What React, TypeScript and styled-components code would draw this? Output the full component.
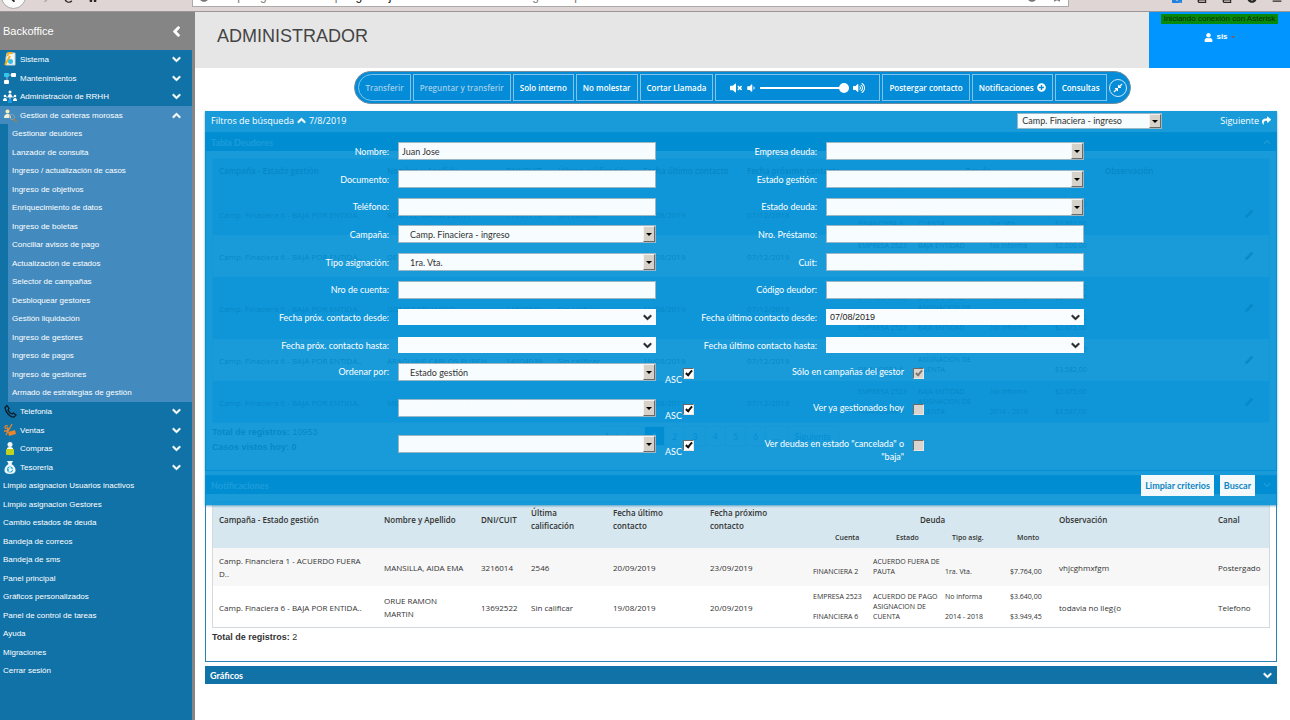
import React from "react";
import styled, { createGlobalStyle, css } from "styled-components";
import {
  FaArrowLeft,
  FaArrowRight,
  FaBars,
  FaBook,
  FaChevronDown,
  FaChevronLeft,
  FaChevronUp,
  FaCompressAlt,
  FaDownload,
  FaHome,
  FaInfoCircle,
  FaPencilAlt,
  FaPlusCircle,
  FaRedo,
  FaRegStar,
  FaShare,
  FaUser,
  FaVolumeDown,
  FaVolumeMute,
  FaVolumeUp,
} from "react-icons/fa";

const sans = `Lato, "Open Sans", sans-serif`;
const openSans = `"Open Sans", "Noto Sans", sans-serif`;
const arial = `"Liberation Sans", Arial, sans-serif`;

const GlobalStyle = createGlobalStyle`
  *, *::before, *::after { box-sizing: border-box; }
  body { margin: 0; background: #fff; font-family: ${sans}; font-size: 9px; color: #333; overflow: hidden; }
  button, input, select { font: inherit; color: inherit; margin: 0; }
  ul { list-style: none; margin: 0; padding: 0; }
  a { color: inherit; text-decoration: none; }
  svg { display: block; flex: none; }
`;

/* heavy chevrons used by menus, panels and date boxes */
const heavy = { stroke: "currentColor", strokeWidth: 50 };

/* ---------- browser strip ---------- */

const BrowserStrip = styled.div`
  height: 12px;
  display: grid;
  grid-template-columns: 192px 878fr 221fr;
  align-content: end;
  align-items: end;
  overflow: hidden;
  background: #dfd5d5;
  border-bottom: 1px solid #9b9696;
`;

const NavIcons = styled.div`
  display: flex;
  align-items: end;
  gap: 14px;
  padding: 0 0 8px 1px;
  color: #2a2626;
`;

const BackButton = styled.button`
  width: 25px;
  height: 25px;
  margin-bottom: -6px;
  padding: 0;
  border: 1px solid #aaa;
  border-radius: 50%;
  background: #fbfbfb;
  display: flex;
  align-items: center;
  justify-content: center;
`;

const AddressBar = styled.div`
  height: 24px;
  margin-bottom: 4px;
  padding: 0 6px 2px;
  display: flex;
  align-items: end;
  gap: 15px;
  background: #fff;
  border: 1px solid #aaa;
  color: #777;
  font: 12px/16px ${arial};
  b { font-weight: 400; color: #111; }
  span { flex: 1; }
  svg { margin-bottom: 2px; }
`;

const ToolIcons = styled.div`
  display: flex;
  align-items: end;
  justify-content: end;
  gap: 15px;
  padding: 0 8px 8px 0;
  color: #2a2626;
`;

/* ---------- shell ---------- */

const Shell = styled.div`
  display: flex;
  min-height: calc(100vh - 12px);
`;

const Sidebar = styled.nav`
  flex: none;
  width: 195px;
  background: #1172a7;
  border-right: 3px solid #858585;
  color: #fff;
  font-family: ${arial};
  font-size: 8px;
`;

const SideHead = styled.div`
  height: 38px;
  padding: 0 10px 0 3px;
  display: flex;
  align-items: center;
  justify-content: space-between;
  background: #858585;
  font-size: 11px;
`;

const rowHeights = css`
  > li > a { height: 19px; }
  > li:nth-child(even) > a { height: 18px; }
`;

const Menu = styled.ul`
  ${rowHeights}
`;

const SubMenu = styled.ul`
  margin-left: 8px;
  background: #438bbe;
  ${rowHeights}
`;

const MenuLink = styled.a<{ $open?: boolean; $sub?: boolean }>`
  display: flex;
  align-items: center;
  gap: 3px;
  padding: 0 11px 0 ${(p) => (p.$sub ? 4 : 3)}px;
  white-space: nowrap;
  ${(p) => p.$open && "background: #438bbe;"}
  > span { flex: 1; }
`;

const Main = styled.main`
  flex: 1;
  min-width: 0;
`;

const TopBar = styled.header`
  display: flex;
  height: 56px;
  background: #e6e6e6;
`;

const Title = styled.h1`
  flex: 1;
  margin: 0;
  padding: 13px 22px;
  font: 400 18px/22px ${arial};
  color: #444;
`;

const UserBox = styled.div`
  width: 141px;
  padding-top: 2px;
  background: #0095ff;
  display: flex;
  flex-direction: column;
  align-items: center;
  gap: 8px;
  font: 8px/10px ${arial};
`;

const Status = styled.span`
  padding: 0 3px;
  background: #078a0c;
  color: #052a08;
  white-space: nowrap;
`;

const UserButton = styled.button`
  display: flex;
  align-items: center;
  gap: 3px;
  padding: 0;
  border: 0;
  background: none;
  color: #fff;
  font-weight: 700;
  i { border: 2px solid transparent; border-top-color: #8a5a4a; border-bottom: 0; }
`;

/* ---------- phone toolbar ---------- */

const CallBar = styled.div`
  width: max-content;
  margin: 3px auto 7px;
  height: 33px;
  padding: 0 3px;
  display: flex;
  align-items: center;
  gap: 2px;
  border: 1px solid #6f8b9c;
  border-radius: 17px;
  background: #048cd8;
`;

const CallButton = styled.button<{ $first?: boolean }>`
  height: 27px;
  padding: 0 6px;
  display: flex;
  align-items: center;
  gap: 3px;
  border: 1px solid #83c3ea;
  border-radius: ${(p) => (p.$first ? "14px 0 0 14px" : "0")};
  background: none;
  color: #fff;
  font: 600 8px ${openSans};
  white-space: nowrap;
  &:disabled { color: #9fcdea; }
`;

const Volume = styled.div`
  height: 27px;
  width: 165px;
  padding: 0 14px;
  display: flex;
  align-items: center;
  gap: 4px;
  border: 1px solid #83c3ea;
  color: #fff;
`;

const Slider = styled.input`
  flex: 1;
  min-width: 0;
  height: 10px;
  appearance: none;
  background: linear-gradient(#fff, #fff) center / 100% 2px no-repeat;
  &::-webkit-slider-thumb {
    appearance: none;
    width: 10px;
    height: 10px;
    border-radius: 50%;
    background: #fff;
  }
`;

const RoundButton = styled.button`
  width: 18px;
  height: 18px;
  padding: 0;
  display: flex;
  align-items: center;
  justify-content: center;
  border: 1px solid #cfe8f7;
  border-radius: 50%;
  background: none;
  color: #fff;
`;

/* ---------- panels ---------- */

const Workspace = styled.div`
  position: relative;
  margin: 0 13px 0 10px;
  padding-top: 21px;
  display: flex;
  flex-direction: column;
  gap: 4px;
`;

const Panel = styled.section`
  border: 1px solid #2a83b3;
  background: #fff;
`;

const PanelHead = styled.h2`
  margin: 0;
  height: 18px;
  padding: 0 5px;
  display: flex;
  align-items: center;
  justify-content: space-between;
  background: #1172a7;
  color: #fff;
  font-size: 9px;
  font-weight: 700;
`;

const PanelBody = styled.div<{ $tall: number }>`
  min-height: ${(p) => p.$tall}px;
  padding: 7px 6px 0;
`;

const DataTable = styled.table<{ $tint: string; $stripe: string; $nowrap: boolean }>`
  width: 100%;
  table-layout: fixed;
  border-collapse: collapse;
  outline: 1px solid #d3d9dc;
  outline-offset: -1px;
  font-family: ${openSans};
  font-size: 8px;
  line-height: 13px;
  white-space: ${(p) => (p.$nowrap ? "nowrap" : "pre-line")};
  th { padding: 5px 0 4px 7px; vertical-align: top; text-align: left; font-weight: 600; }
  td { padding: 6px 0 6px 7px; }
  thead { background: ${(p) => p.$tint}; }
  tbody tr:nth-child(odd) { background: ${(p) => p.$stripe}; }
`;

const HeadLabel = styled.div<{ $two?: boolean; $mid?: boolean }>`
  height: ${(p) => (p.$two ? 26 : 14)}px;
  display: flex;
  align-items: center;
  justify-content: ${(p) => (p.$mid ? "center" : "start")};
`;

const DebtGrid = styled.div<{ $head?: boolean }>`
  display: grid;
  grid-template-columns: ${(p) => (p.$head ? "61px 56px 65px" : "60px 72px 65px")} 1fr;
  align-items: end;
  padding-left: ${(p) => (p.$head ? 22 : 0)}px;
  font-size: 7px;
  line-height: ${(p) => (p.$head ? 12 : 10)}px;
  white-space: normal;
`;

const Totals = styled.div`
  padding-top: 2px;
  line-height: 15px;
  font-family: ${arial};
`;

const TableFoot = styled.div`
  display: grid;
  grid-template-columns: 385fr 673fr;
  align-items: start;
`;

const Pager = styled.div`
  margin-top: 3px;
  display: flex;
  button {
    height: 20px;
    min-width: 20px;
    padding: 0 7px;
    border: 1px solid #ccdde6;
    border-left-width: 0;
    background: none;
    color: #1172a7;
  }
  button[aria-current] { background: #1172a7; color: #fff; }
`;

/* ---------- filter sheet ---------- */

const FilterSheet = styled.form`
  position: absolute;
  inset: 0 0 auto 0;
  min-height: 394px;
  display: flex;
  flex-direction: column;
  background: rgba(0, 144, 214, 0.9);
  color: #fff;
  box-shadow: 0 1px 2px rgba(0, 110, 170, 0.6);
`;

const FilterHead = styled.div`
  height: 19px;
  padding: 0 6px;
  display: flex;
  align-items: center;
  justify-content: space-between;
`;

const Caption = styled.button`
  padding: 0;
  border: 0;
  background: none;
  display: flex;
  align-items: center;
  gap: 3px;
  font-family: ${openSans};
`;

const HeadTools = styled.div`
  display: flex;
  align-items: center;
  gap: 58px;
`;

const Rows = styled.div`
  padding-top: 7px;
  flex: 1;
`;

const Row = styled.div`
  display: grid;
  grid-template-columns: 184fr 258fr 152fr 258fr 184fr;
  column-gap: 9px;
  align-items: center;
  height: 28px;
  &:nth-child(3n) { height: 27px; }
`;

const SortRow = styled.div`
  display: grid;
  grid-template-columns: 184fr 258fr 30fr 200fr 364fr;
  column-gap: 9px;
  align-items: start;
  padding-top: 4px;
  height: 36px;
`;

const Label = styled.label<{ $sort?: boolean }>`
  text-align: right;
  line-height: 13px;
  ${(p) => p.$sort && "padding: 2px 0 0 50px;"}
`;

const TextBox = styled.input`
  width: 100%;
  height: 18px;
  padding: 0 3px;
  border: 1px solid #9bb6c4;
  border-radius: 0;
  background: rgba(255, 255, 255, 0.97);
  color: #333;
`;

const SelectWrap = styled.div<{ $small?: boolean }>`
  position: relative;
  width: ${(p) => (p.$small ? "145px" : "100%")};
  height: ${(p) => (p.$small ? 16 : 18)}px;
  select {
    width: 100%;
    height: 100%;
    padding: 0 14px 0 ${(p) => (p.$small ? 4 : 11)}px;
    appearance: none;
    border: 1px solid #9bb6c4;
    border-radius: 0;
    background: rgba(255, 255, 255, 0.97);
    color: #333;
  }
  &::before {
    content: "";
    position: absolute;
    inset: 1px 1px 1px auto;
    width: 12px;
    background: #d6d2ca;
    border: 1px solid;
    border-color: #f4f2ee #6d6a66 #6d6a66 #f4f2ee;
    pointer-events: none;
  }
  &::after {
    content: "";
    position: absolute;
    right: 4px;
    top: calc(50% - 1px);
    border: 3px solid transparent;
    border-top-color: #000;
    border-bottom: 0;
    pointer-events: none;
  }
`;

const DateBox = styled.div`
  height: 16px;
  display: flex;
  align-items: center;
  padding-right: 4px;
  background: rgba(255, 255, 255, 0.98);
  color: #222;
  font-family: ${arial};
  input { flex: 1; min-width: 0; height: 16px; padding: 0 4px; border: 0; background: none; outline: 0; }
  button { padding: 0; border: 0; background: none; }
`;

const Asc = styled.label`
  display: flex;
  align-items: start;
  gap: 1px;
  padding-top: 5px;
  span { padding-top: 6px; line-height: 12px; }
`;

const Tick = styled.input`
  appearance: none;
  flex: none;
  width: 11px;
  height: 11px;
  border: 1px solid;
  border-color: #6d6a66 #e8e6e2 #e8e6e2 #6d6a66;
  background: #fff;
  display: grid;
  place-items: center;
  &:checked::after {
    content: "";
    width: 4px;
    height: 7px;
    border: solid #111;
    border-width: 0 2px 2px 0;
    rotate: 40deg;
    translate: 0 -1px;
  }
  &:disabled { background: #d9d5ce; }
  &:disabled::after { border-color: #7d7a76; }
`;

const TickCell = styled.div`
  padding-top: 5px;
`;

const Actions = styled.div`
  display: flex;
  justify-content: end;
  gap: 6px;
  padding: 0 22px 9px;
  button {
    height: 21px;
    padding: 0 4px;
    border: 0;
    background: #f3f8fa;
    color: #0b86c4;
    font-weight: 700;
  }
`;

/* ---------- sidebar drawings ---------- */

const Ico = ({ name }: { name: string }) => (
  <svg width="14" height="15" viewBox="0 0 14 15" fill="none">
    {name === "sistema" && (
      <>
        <path d="M4 1h8v12H3V6z" fill="#f4f7f8" stroke="#c9d3d8" />
        <path d="M2 13L7 4M5 4a2 2 0 0 1 4-2" stroke="#f2b01e" strokeWidth="2" />
        <circle cx="7.500" cy="9.500" r="2.500" fill="#35bde6" />
      </>
    )}
    {name === "mant" && (
      <>
        <path d="M4 4h7M4 4v8" stroke="#9fb6c2" />
        <rect x="1" y="2" width="5" height="4" rx="1" fill="#35c6f0" />
        <rect x="8" y="2" width="5" height="4" rx="1" fill="#fff" />
        <rect x="1" y="9" width="5" height="4" rx="1" fill="#fff" />
      </>
    )}
    {name === "rrhh" && (
      <>
        <path d="M3 8h8M7 6v5" stroke="#cfe0ea" />
        <circle cx="7" cy="3" r="1.500" fill="#fff" />
        <path d="M5 8q0-3 2-3t2 3z" fill="#fff" />
        <circle cx="2" cy="7" r="1.300" fill="#fff" />
        <path d="M0 12q0-3 2-3t2 3zM10 12q0-3 2-3t2 3z" fill="#fff" />
        <circle cx="12" cy="7" r="1.300" fill="#fff" />
        <path d="M5 14q0-4 2-4t2 4z" fill="#1b9be8" />
      </>
    )}
    {name === "gestion" && (
      <>
        <circle cx="4.500" cy="3.500" r="2" fill="#f7efb4" />
        <path d="M1 10q0-4 3.500-4T8 10z" fill="#f3f0d8" />
        <circle cx="9" cy="9" r="2.500" stroke="#8e9ba6" />
        <path d="M11 11l3 3" stroke="#a2803c" strokeWidth="1.500" />
      </>
    )}
    {name === "tel" && (
      <path
        d="M2 3.500l2-2 2 3-1 1.500q1 3 4 4l1.500-1 2.500 2-2 2q-3 .5-6-3T2 3.500z"
        stroke="#0b1c28"
        strokeWidth="1.300"
      />
    )}
    {name === "ventas" && (
      <>
        <path d="M9 1L3 12M5 3q-3-1-3 1t2 1 0 3H1" stroke="#e8862c" strokeWidth="1.300" />
        <path d="M5 9l7-2 1 4-7 2z" fill="#e8862c" />
      </>
    )}
    {name === "compras" && (
      <>
        <circle cx="7" cy="3.500" r="2.500" fill="#f1f5f6" />
        <path d="M4 7q3-2 6 0v3H4z" fill="#fff" />
        <rect x="3" y="8" width="8" height="6" rx="1" fill="#c2d11c" />
      </>
    )}
    {name === "tesoreria" && (
      <>
        <path d="M4 1h6L8.500 4Q13 7 12.500 11q-.5 3-5.500 3T1.500 11Q1 7 5.500 4z" fill="#eef5f7" />
        <circle cx="7" cy="9.500" r="3" fill="#22a9d8" />
        <path d="M8.500 8.300q-3-1-3 .3t3 1-3 1.600M7 7v5" stroke="#fff" />
      </>
    )}
  </svg>
);

const subItems = [
  "Gestionar deudores",
  "Lanzador de consulta",
  "Ingreso / actualización de casos",
  "Ingreso de objetivos",
  "Enriquecimiento de datos",
  "Ingreso de boletas",
  "Conciliar avisos de pago",
  "Actualización de estados",
  "Selector de campañas",
  "Desbloquear gestores",
  "Gestión liquidación",
  "Ingreso de gestores",
  "Ingreso de pagos",
  "Ingreso de gestiones",
  "Armado de estrategias de gestión",
];

type Item = { text: string; icon?: string; open?: boolean };

const menu: Item[] = [
  { text: "Sistema", icon: "sistema" },
  { text: "Mantenimientos", icon: "mant" },
  { text: "Administración de RRHH", icon: "rrhh" },
  { text: "Gestion de carteras morosas", icon: "gestion", open: true },
  { text: "Telefonia", icon: "tel" },
  { text: "Ventas", icon: "ventas" },
  { text: "Compras", icon: "compras" },
  { text: "Tesoreria", icon: "tesoreria" },
  { text: "Limpio asignacion Usuarios inactivos" },
  { text: "Limpio asignacion Gestores" },
  { text: "Cambio estados de deuda" },
  { text: "Bandeja de correos" },
  { text: "Bandeja de sms" },
  { text: "Panel principal" },
  { text: "Gráficos personalizados" },
  { text: "Panel de control de tareas" },
  { text: "Ayuda" },
  { text: "Migraciones" },
  { text: "Cerrar sesión" },
];

/* ---------- table data ---------- */

type Debt = [string, string, string, string];
type Case = { cells: string[]; debts: Debt[]; note?: string; channel?: string };

const debtors: Case[] = [
  {
    cells: ["Camp. Finaciera 6 - BAJA POR ENTIDA..", "BENITEZ MARIA EDITH", "31631776", "Sin calificar", "19/08/2019", "07/12/2018"],
    debts: [
      ["EMPRESA 2523", "BAJA ENTIDAD", "No informa", "$3.115,00"],
      ["FINANCIERA 6", "ASIGNACION DE CUENTA", "1ra. Vta.", "$3.862,00"],
    ],
  },
  {
    cells: ["Camp. Finaciera 6 - BAJA POR ENTIDA..", "DEL VALLE ANA MARIA", "24255001", "Sin calificar", "19/08/2019", "07/12/2018"],
    debts: [
      ["EMPRESA 2523", "BAJA ENTIDAD", "No informa", "$2.000,00"],
      ["FINANCIERA 6", "PREPAGO", "1ra. Vta.", "$204,00"],
      ["FINANCIERA 6", "VENDIDA", "1ra. Vta.", "$300,00"],
    ],
  },
  {
    cells: ["Camp. Finaciera 6 - BAJA POR ENTIDA..", "GOMEZ EDUARDO", "14630669", "Sin calificar", "19/08/2019", "07/12/2018"],
    debts: [
      ["EMPRESA 2523", "BAJA ENTIDAD", "No informa", "$3.117,70"],
      ["EMPRESA 2523", "BAJA ENTIDAD", "No informa", "$3.117,70"],
      ["FINANCIERA 6", "ASIGNACION DE CUENTA", "No informa", "$3.355,00"],
      ["EMPRESA 2523", "BAJA ENTIDAD", "No informa", "$2.475,00"],
    ],
  },
  {
    cells: ["Camp. Finaciera 6 - BAJA POR ENTIDA..", "ARAGUINE CARLOS RUBEN", "14804039", "Sin calificar", "19/08/2019", "07/12/2018"],
    debts: [
      ["EMPRESA 2523", "BAJA ENTIDAD", "No informa", "$2.775,00"],
      ["FINANCIERA 6", "ASIGNACION DE CUENTA", "", "$3.582,00"],
    ],
  },
  {
    cells: ["Camp. Finaciera 6 - BAJA POR ENTIDA..", "MENDEZ JORGE DANIEL", "14855003", "Sin calificar", "19/08/2019", "07/12/2018"],
    debts: [
      ["EMPRESA 2523", "BAJA ENTIDAD", "No informa", "$2.475,00"],
      ["FINANCIERA 6", "ASIGNACION DE CUENTA", "2014 - 2018", "$3.587,00"],
    ],
  },
];

const results: Case[] = [
  {
    cells: ["Camp. Financiera 1 - ACUERDO FUERA\nD..", "MANSILLA, AIDA EMA", "3216014", "2546", "20/09/2019", "23/09/2019"],
    debts: [["FINANCIERA 2", "ACUERDO FUERA DE PAUTA", "1ra. Vta.", "$7.764,00"]],
    note: "vhjcghmxfgm",
    channel: "Postergado",
  },
  {
    cells: ["Camp. Finaciera 6 - BAJA POR ENTIDA..", "ORUE RAMON\nMARTIN", "13692522", "Sin calificar", "19/08/2019", "20/09/2019"],
    debts: [
      ["EMPRESA 2523", "ACUERDO DE PAGO", "No informa", "$3.640,00"],
      ["FINANCIERA 6", "ASIGNACION DE CUENTA", "2014 - 2018", "$3.949,45"],
    ],
    note: "todavia no lleg{o",
    channel: "Telefono",
  },
];

const heads = [
  "Campaña - Estado gestión",
  "Nombre y Apellido",
  "DNI/CUIT",
  "Última\ncalificación",
  "Fecha último\ncontacto",
  "Fecha próximo\ncontacto",
];

const debtorCols = [168, 119, 52, 85, 104, 111, 247, 0, 32];
const resultCols = [165, 97, 50, 82, 97, 103, 246, 0, 59];

function CaseTable({ rows, cols, wide = false }: { rows: Case[]; cols: number[]; wide?: boolean }) {
  return (
    <DataTable $tint={wide ? "#d6e7ef" : "#9ccbe8"} $stripe={wide ? "#f7f7f7" : "#9ccbe8"} $nowrap={!wide}>
      <colgroup>
        {cols.map((w, i) => (
          <col key={i} width={w || undefined} />
        ))}
      </colgroup>
      <thead>
        <tr>
          {heads.map((h) => (
            <th key={h}>
              <HeadLabel $two={wide}>{h}</HeadLabel>
            </th>
          ))}
          <th>
            <HeadLabel $two={wide} $mid>Deuda</HeadLabel>
            <DebtGrid $head>
              <span>Cuenta</span>
              <span>Estado</span>
              <span>Tipo asig.</span>
              <span>Monto</span>
            </DebtGrid>
          </th>
          <th>
            <HeadLabel $two={wide}>Observación</HeadLabel>
          </th>
          <th>
            <HeadLabel $two={wide}>{wide ? "Canal" : ""}</HeadLabel>
          </th>
        </tr>
      </thead>
      <tbody>
        {rows.map((r, i) => (
          <tr key={i}>
            {r.cells.map((c, j) => (
              <td key={j}>{c}</td>
            ))}
            <td>
              {r.debts.map((d, j) => (
                <DebtGrid key={j}>
                  {d.map((v, k) => (
                    <span key={k}>{v}</span>
                  ))}
                </DebtGrid>
              ))}
            </td>
            <td>{r.note}</td>
            <td>{wide ? r.channel : <FaPencilAlt size={8} />}</td>
          </tr>
        ))}
      </tbody>
    </DataTable>
  );
}

/* ---------- form pieces ---------- */

type FieldDef = { label: string; kind: "text" | "select" | "date"; value?: string };

const left: FieldDef[] = [
  { label: "Nombre:", kind: "text", value: "Juan Jose" },
  { label: "Documento:", kind: "text" },
  { label: "Teléfono:", kind: "text" },
  { label: "Campaña:", kind: "select", value: "Camp. Finaciera - ingreso" },
  { label: "Tipo asignación:", kind: "select", value: "1ra. Vta." },
  { label: "Nro de cuenta:", kind: "text" },
  { label: "Fecha próx. contacto desde:", kind: "date" },
  { label: "Fecha próx. contacto hasta:", kind: "date" },
];

const right: FieldDef[] = [
  { label: "Empresa deuda:", kind: "select" },
  { label: "Estado gestión:", kind: "select" },
  { label: "Estado deuda:", kind: "select" },
  { label: "Nro. Préstamo:", kind: "text" },
  { label: "Cuit:", kind: "text" },
  { label: "Código deudor:", kind: "text" },
  { label: "Fecha último contacto desde:", kind: "date", value: "07/08/2019" },
  { label: "Fecha último contacto hasta:", kind: "date" },
];

const sorts = [
  { label: "Ordenar por:", value: "Estado gestión", check: "Sólo en campañas del gestor", on: true },
  { label: "", value: "", check: "Ver ya gestionados hoy", on: false },
  { label: "", value: "", check: 'Ver deudas en estado "cancelada" o "baja"', on: false },
];

function Select({ id, value, small, name }: { id: string; value?: string; small?: boolean; name?: string }) {
  return (
    <SelectWrap $small={small}>
      <select id={id} aria-label={name}>
        <option>{value}</option>
      </select>
    </SelectWrap>
  );
}

function Field({ def, id }: { def: FieldDef; id: string }) {
  return (
    <>
      <Label htmlFor={id}>{def.label}</Label>
      {def.kind === "text" && <TextBox id={id} defaultValue={def.value} />}
      {def.kind === "select" && <Select id={id} value={def.value} />}
      {def.kind === "date" && (
        <DateBox>
          <input id={id} defaultValue={def.value} />
          <button type="button" aria-label="Abrir calendario">
            <FaChevronDown size={9} {...heavy} />
          </button>
        </DateBox>
      )}
    </>
  );
}

export default function App() {
  return (
    <>
      <GlobalStyle />
      <BrowserStrip>
        <NavIcons>
          <BackButton aria-label="Atrás">
            <FaArrowLeft size={12} />
          </BackButton>
          <FaArrowRight size={10} color="#aaa" />
          <FaRedo size={10} />
          <FaHome size={10} />
        </NavIcons>
        <AddressBar>
          <FaInfoCircle size={10} />
          <span>
            https://gestion.adminpro.<b>gestorjuridico.com</b>/administrador/gestion/panel
          </span>
          <FaInfoCircle size={10} />
          <FaRegStar size={10} />
        </AddressBar>
        <ToolIcons>
          <FaDownload size={10} color="#1a7fe0" />
          <FaBook size={10} />
          <FaBook size={10} />
          <FaInfoCircle size={10} />
          <FaBars size={10} />
        </ToolIcons>
      </BrowserStrip>
      <Shell>
        <Sidebar>
          <SideHead>
            Backoffice
            <FaChevronLeft size={11} {...heavy} />
          </SideHead>
          <Menu>
            {menu.map((m) => (
              <li key={m.text}>
                <MenuLink href="#" $open={m.open}>
                  {m.icon && <Ico name={m.icon} />}
                  <span>{m.text}</span>
                  {m.icon && (m.open ? <FaChevronUp size={9} {...heavy} /> : <FaChevronDown size={9} {...heavy} />)}
                </MenuLink>
                {m.open && (
                  <SubMenu>
                    {subItems.map((s) => (
                      <li key={s}>
                        <MenuLink href="#" $sub>
                          {s}
                        </MenuLink>
                      </li>
                    ))}
                  </SubMenu>
                )}
              </li>
            ))}
          </Menu>
        </Sidebar>
        <Main>
          <TopBar>
            <Title>ADMINISTRADOR</Title>
            <UserBox>
              <Status>Iniciando conexión con Asterisk</Status>
              <UserButton>
                <FaUser size={9} />
                sis
                <i />
              </UserButton>
            </UserBox>
          </TopBar>
          <CallBar>
            <CallButton $first disabled>Transferir</CallButton>
            <CallButton disabled>Preguntar y transferir</CallButton>
            <CallButton>Solo interno</CallButton>
            <CallButton>No molestar</CallButton>
            <CallButton>Cortar Llamada</CallButton>
            <Volume>
              <FaVolumeMute size={12} />
              <FaVolumeDown size={10} />
              <Slider type="range" defaultValue={100} aria-label="Volumen" />
              <FaVolumeUp size={12} />
            </Volume>
            <CallButton>Postergar contacto</CallButton>
            <CallButton>
              Notificaciones
              <FaPlusCircle size={9} />
            </CallButton>
            <CallButton>Consultas</CallButton>
            <RoundButton aria-label="Contraer">
              <FaCompressAlt size={10} />
            </RoundButton>
          </CallBar>
          <Workspace>
            <Panel>
              <PanelHead>
                Tabla Deudores
                <FaChevronUp size={8} />
              </PanelHead>
              <PanelBody $tall={319}>
                <CaseTable rows={debtors} cols={debtorCols} />
                <TableFoot>
                  <Totals>
                    <b>Total de registros:</b> 10953
                    <br />
                    <b>Casos vistos hoy: 0</b>
                  </Totals>
                  <Pager>
                    <button>Anterior</button>
                    <button aria-current="page">1</button>
                    <button>2</button>
                    <button>3</button>
                    <button>4</button>
                    <button>5</button>
                    <button>6</button>
                    <button>...</button>
                    <button>Siguiente</button>
                  </Pager>
                </TableFoot>
              </PanelBody>
            </Panel>
            <Panel>
              <PanelHead>
                Notificaciones
                <FaChevronDown size={8} />
              </PanelHead>
              <PanelBody $tall={167}>
                <CaseTable rows={results} cols={resultCols} wide />
                <Totals>
                  <b>Total de registros:</b> 2
                </Totals>
              </PanelBody>
            </Panel>
            <PanelHead>
              Gráficos
              <FaChevronDown size={9} {...heavy} />
            </PanelHead>
            <FilterSheet onSubmit={(e) => e.preventDefault()}>
              <FilterHead>
                <Caption type="button">
                  Filtros de búsqueda <FaChevronUp size={9} {...heavy} /> 7/8/2019
                </Caption>
                <HeadTools>
                  <Select id="campaign" name="Campaña activa" value="Camp. Finaciera - ingreso" small />
                  <Caption type="button">
                    Siguiente <FaShare size={9} />
                  </Caption>
                </HeadTools>
              </FilterHead>
              <Rows>
                {left.map((f, i) => (
                  <Row key={f.label}>
                    <Field def={f} id={`l${i}`} />
                    <Field def={right[i]} id={`r${i}`} />
                  </Row>
                ))}
                {sorts.map((s, i) => (
                  <SortRow key={s.check}>
                    <Label htmlFor={`s${i}`} $sort>{s.label}</Label>
                    <Select id={`s${i}`} value={s.value} name={s.label ? undefined : "Orden adicional"} />
                    <Asc>
                      <span>ASC</span>
                      <Tick type="checkbox" defaultChecked />
                    </Asc>
                    <Label htmlFor={`c${i}`} $sort>{s.check}</Label>
                    <TickCell>
                      <Tick id={`c${i}`} type="checkbox" defaultChecked={s.on} disabled />
                    </TickCell>
                  </SortRow>
                ))}
              </Rows>
              <Actions>
                <button type="button">Limpiar criterios</button>
                <button>Buscar</button>
              </Actions>
            </FilterSheet>
          </Workspace>
        </Main>
      </Shell>
    </>
  );
}
